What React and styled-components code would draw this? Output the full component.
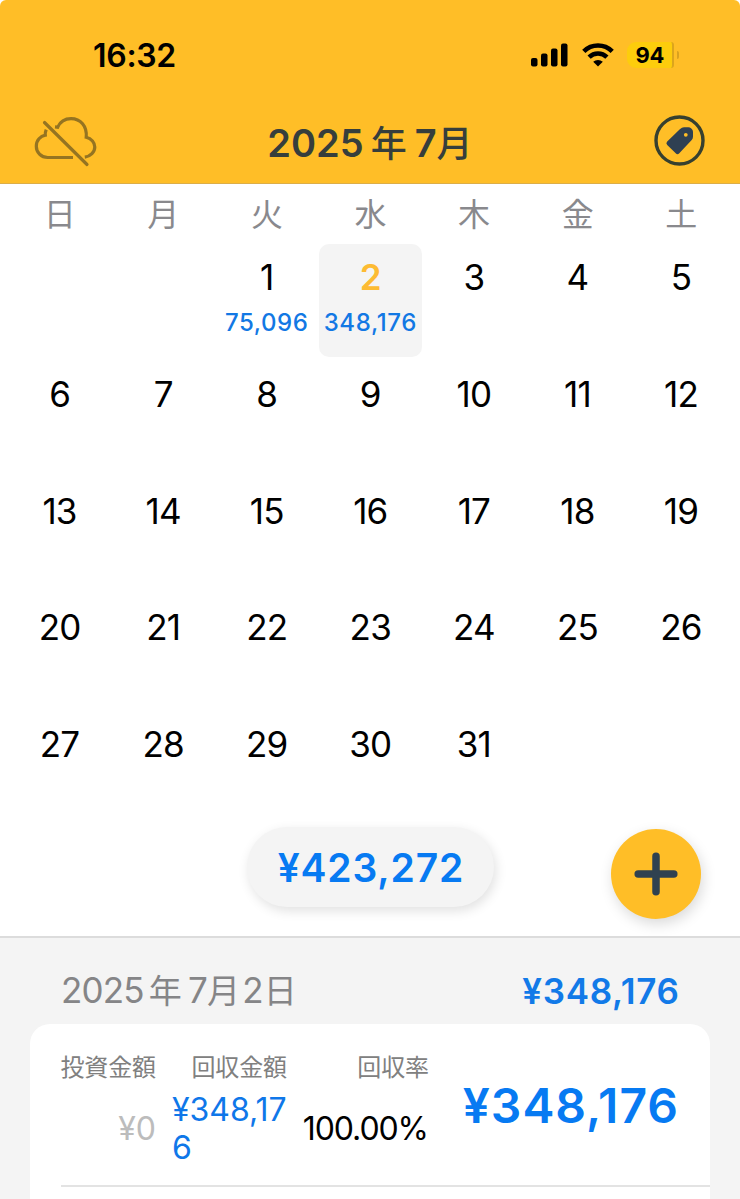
import React from 'react';
import styled, { createGlobalStyle } from 'styled-components';

const Global = createGlobalStyle`
  * { box-sizing: border-box; }
  body { margin: 0; background: #fff; }
`;

const Screen = styled.div`
  width: 740px;
  height: 1199px;
  overflow: hidden;
  display: flex;
  flex-direction: column;
  background: #fff;
  color: #000;
  font-family: Inter, "Noto Sans CJK JP", sans-serif;
`;

const Header = styled.header`
  height: 184px;
  flex: none;
  background: #ffbe27;
  border-bottom: 1px solid #dcae48;
  border-radius: 6px 6px 0 0;
`;

const StatusBar = styled.div`
  height: 95px;
  padding: 15px 61px 0 93px;
  display: flex;
  align-items: center;
  justify-content: space-between;
`;

const Text = styled.span`
  display: block;
  font-size: ${(p) => p.$size}px;
  font-weight: ${(p) => p.$weight || 400};
  letter-spacing: ${(p) => p.$track || 0}px;
  margin-right: ${(p) => -(p.$track || 0)}px;
  line-height: ${(p) => p.$line || p.$size}px;
  color: ${(p) => p.$color || 'inherit'};
  white-space: nowrap;
`;

const Clock = styled(Text)`
  padding-top: 2px;
`;

const StatusIcons = styled.div`
  display: flex;
  align-items: center;
`;

const Signal = styled.svg`
  margin-right: 14px;
`;

const Wifi = styled.svg`
  margin-right: 13px;
`;

const Battery = styled.div`
  width: 47px;
  height: 26px;
  padding-left: 1px;
  border-radius: 9px 3px 3px 9px;
  background: #fdcd0c;
  border-right: 2px solid #dba51d;
  display: flex;
  align-items: center;
  justify-content: center;
`;

const BatteryTip = styled.div`
  width: 2px;
  height: 8px;
  margin: 0 0 0 3px;
  border-radius: 0 3px 3px 0;
  background: #d9a11f;
`;

const NavBar = styled.div`
  height: 88px;
  padding: 3px 35px 0 34px;
  display: grid;
  grid-template-columns: 64px 1fr 51px;
  align-items: center;
`;

const Title = styled.h1`
  margin: 5px 0 0 -12px;
  text-align: center;
  font-size: 38px;
  font-weight: 600;
  line-height: 40px;
  letter-spacing: 0;
  color: #363e3c;
`;

const Kanji = styled.span`
  margin: 0 ${(p) => p.$right || 0}px 0 ${(p) => p.$left || 0}px;
  font-size: ${(p) => p.$size}px;
  font-weight: ${(p) => p.$weight || 400};
`;

const Weekdays = styled.div`
  height: 60px;
  flex: none;
  padding: 0 7px 0 8px;
  display: grid;
  grid-template-columns: repeat(7, 1fr);
`;

const Weekday = styled.span`
  padding-top: 15px;
  text-align: center;
  font-size: 32px;
  line-height: 32px;
  color: #89898d;
`;

const Month = styled.div`
  height: 583px;
  flex: none;
  padding: 0 7.2px 0 7.8px;
  display: grid;
  grid-template-columns: repeat(7, 1fr);
  grid-auto-rows: 112.75px;
  row-gap: 4px;
`;

const Day = styled.div`
  display: flex;
  flex-direction: column;
  align-items: center;
  padding-top: 13px;
  border-radius: 10px;
  background: ${(p) => (p.$selected ? '#f4f4f4' : 'transparent')};
  color: ${(p) => (p.$selected ? '#fdbb33' : '#000')};
  font-size: 35px;
  font-weight: ${(p) => (p.$selected ? 600 : 400)};
  line-height: 40px;
  letter-spacing: -0.8px;
`;

const Amount = styled.span`
  margin-top: 14px;
  font-size: 24px;
  font-weight: 500;
  line-height: 24px;
  letter-spacing: 0.6px;
  color: #1278e4;
`;

const TotalBar = styled.div`
  height: 109px;
  flex: none;
  padding: 0 39px 0 247px;
  display: flex;
  justify-content: space-between;
`;

const TotalPill = styled.div`
  width: 247px;
  height: 80px;
  border-radius: 40px;
  background: #f4f4f4;
  box-shadow: 2px 4px 12px rgba(0, 0, 0, 0.12);
  display: flex;
  align-items: center;
  justify-content: center;
`;

const AddButton = styled.button`
  width: 90px;
  height: 90px;
  margin-top: 2px;
  padding: 0;
  border: 0;
  border-radius: 50%;
  background: #ffbe27;
  box-shadow: 2px 5px 14px rgba(0, 0, 0, 0.15);
  display: flex;
  align-items: center;
  justify-content: center;
`;

const Details = styled.section`
  position: relative;
  flex: 1;
  min-height: 0;
  padding: 0 30px;
  border-top: 2px solid #dcdcdc;
  background: #f4f4f4;
`;

const DetailsHead = styled.div`
  height: 86px;
  padding: 20px 31px 0;
  display: flex;
  align-items: center;
  justify-content: space-between;
`;

const Card = styled.div`
  height: 200px;
  padding: 32px 0 0 31px;
  border-radius: 20px 20px 0 0;
  background: #fff;
`;

const Record = styled.div`
  height: 131px;
  padding-right: 32px;
  border-bottom: 2px solid #e3e3e3;
  display: flex;
`;

const Stat = styled.div`
  width: ${(p) => p.$width}px;
  margin-right: ${(p) => p.$gap}px;
  display: flex;
  flex-direction: column;
  align-items: flex-end;
`;

const StatLabel = styled.span`
  font-size: 24px;
  line-height: 24px;
  letter-spacing: -0.1px;
  color: #808080;
  white-space: nowrap;
`;

const StatValue = styled.div`
  height: 76px;
  width: 100%;
  margin-top: 11px;
  display: flex;
  align-items: center;
  justify-content: flex-end;
`;

const Wrapped = styled.span`
  width: 100%;
  font-size: 32px;
  line-height: 38px;
  letter-spacing: 0;
  white-space: nowrap;
  color: #0f77e9;
`;

const RecordTotal = styled.div`
  flex: 1;
  padding-top: 26px;
  display: flex;
  justify-content: flex-end;
`;

const week = ['日', '月', '火', '水', '木', '金', '土'];
const amounts = { 1: '75,096', 2: '348,176' };
const days = [null, null, ...Array.from({ length: 31 }, (_, i) => i + 1)];

export default function App() {
  return (
    <Screen>
      <Global />
      <Header>
        <StatusBar>
          <Clock $size={32} $weight={600} $track={-0.3}>16:32</Clock>
          <StatusIcons>
            <Signal width="37" height="24" viewBox="0 0 37 24">
              <rect x="0" y="15" width="6.5" height="8.5" rx="2" />
              <rect x="10" y="10.5" width="6.5" height="13" rx="2" />
              <rect x="20" y="5.5" width="6.5" height="18" rx="2" />
              <rect x="30" y="0.5" width="6.5" height="23" rx="2" />
            </Signal>
            <Wifi width="32" height="24" viewBox="0 0 32 24">
              <g fill="none" stroke="#000" strokeWidth="4.6">
                <path d="M1.8 8.3a20.3 20.3 0 0 1 28.400 0" />
                <path d="M7.1 14.1a12.8 12.8 0 0 1 17.800 0" />
              </g>
              <path d="M11.2 18.8a7.2 7.2 0 0 1 9.600 0L16 23.600z" />
            </Wifi>
            <Battery>
              <Text $size={22} $weight={700} $track={-0.3}>94</Text>
            </Battery>
            <BatteryTip />
          </StatusIcons>
        </StatusBar>
        <NavBar>
          <svg width="64" height="52" viewBox="0 0 64 52" fill="none" stroke="#957421" strokeWidth="3.2">
            <path d="M39 42.5H13.8C7 42.500 2.300 37.300 2.300 31.200C2.300 25.200 6.500 21 11.300 20.200C11.100 18.300 11.400 16.600 12.200 14.700" />
            <path d="M21 11.900L23.700 12.200C26 7 31 3.600 37 3.600C46.500 3.600 53.300 11 52.200 22.300C57.500 23.500 60.800 27.700 60.800 32C60.800 37 56.500 41.500 50.800 42.200" />
            <path d="M10.500 7.500L53 49.500" strokeLinecap="round" />
          </svg>
          <Title>
            2025<Kanji $size={36} $weight={500} $left={7} $right={8}>年</Kanji>7<Kanji $size={36} $weight={500}>月</Kanji>
          </Title>
          <svg width="51" height="51" viewBox="0 0 51 51">
            <circle cx="25.500" cy="25.500" r="23.500" fill="none" stroke="#37402f" strokeWidth="3.400" />
            <path fillRule="evenodd" fill="#2f4052" d="M25.800 14.300Q28 12.300 30 12.300H34.500Q36 12.300 37 13.300L38 14.300Q39 15.300 39 17V21.500Q39 23.500 37.700 25L25.300 38.300Q23.500 40 21.700 38.300L13.200 30Q11.500 28.300 13.200 26.500ZM31.800 17.900a1.900 1.900 0 1 0 .01 3.800a1.900 1.900 0 1 0 -.01 -3.800Z" />
          </svg>
        </NavBar>
      </Header>
      <Weekdays>
        {week.map((d) => <Weekday key={d}>{d}</Weekday>)}
      </Weekdays>
      <Month>
        {days.map((d, i) => (
          <Day key={i} $selected={d === 2}>
            {d}
            {amounts[d] && <Amount>{amounts[d]}</Amount>}
          </Day>
        ))}
      </Month>
      <TotalBar>
        <TotalPill>
          <Text $size={39} $weight={600} $track={0.85} $color="#077af2">¥423,272</Text>
        </TotalPill>
        <AddButton aria-label="追加">
          <svg width="44" height="44" viewBox="0 0 44 44" stroke="#2f4150" strokeWidth="7.500" strokeLinecap="round">
            <path d="M22 4.200V39.800M4.200 22H39.800" />
          </svg>
        </AddButton>
      </TotalBar>
      <Details>
        <DetailsHead>
          <Text $size={35} $color="#858587" $track={-0.8}>
            2025<Kanji $size={33} $left={5} $right={7}>年</Kanji>7<Kanji $size={33} $right={3}>月</Kanji>2<Kanji $size={33} $left={1}>日</Kanji>
          </Text>
          <Text $size={35} $weight={600} $track={0.7} $color="#127ae8">¥348,176</Text>
        </DetailsHead>
        <Card>
          <Record>
            <Stat $width={95} $gap={16}>
              <StatLabel>投資金額</StatLabel>
              <StatValue><Text $size={32} $color="#bcbcbc">¥0</Text></StatValue>
            </Stat>
            <Stat $width={115} $gap={15}>
              <StatLabel>回収金額</StatLabel>
              <StatValue><Wrapped>¥348,17<br />6</Wrapped></StatValue>
            </Stat>
            <Stat $width={127} $gap={0}>
              <StatLabel>回収率</StatLabel>
              <StatValue><Text $size={32} $track={-1.100}>100.00%</Text></StatValue>
            </Stat>
            <RecordTotal>
              <Text $size={48} $weight={600} $track={1} $color="#077af2">¥348,176</Text>
            </RecordTotal>
          </Record>
        </Card>
      </Details>
    </Screen>
  );
}
